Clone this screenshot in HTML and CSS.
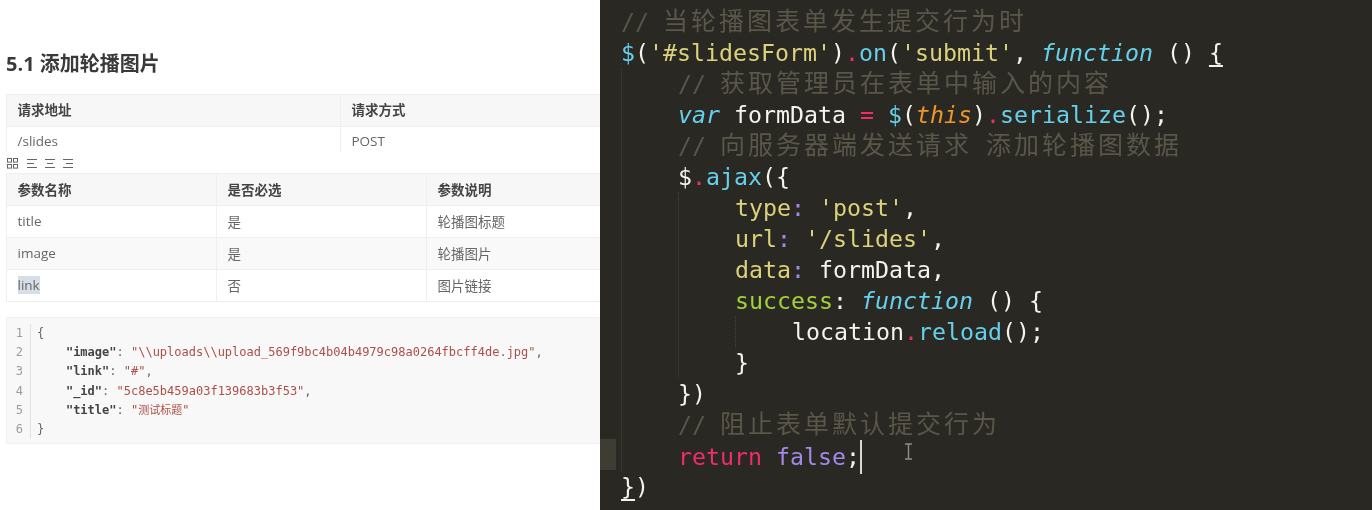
FILE: index.html
```html
<!DOCTYPE html>
<html lang="zh">
<head>
<meta charset="utf-8">
<title>添加轮播图片</title>
<link rel="stylesheet" href="styles.css">
</head>
<body>
<main class="page">
  <section class="doc">
    <h2 class="title">5.1 添加轮播图片</h2>
    <div class="clip">
      <table class="tbl tbl-two">
        <tr><th>请求地址</th><th>请求方式</th></tr>
        <tr><td>/slides</td><td>POST</td></tr>
      </table>
    </div>
    <div class="toolbar">
      <svg class="ico" width="13" height="11" viewBox="0 0 13 11"><g fill="none" stroke="#666" stroke-width="1"><rect x="1.5" y="0.5" width="4" height="3.6"/><rect x="7.5" y="0.5" width="4" height="3.6"/><rect x="1.5" y="6.5" width="4" height="3.6"/><rect x="7.5" y="6.5" width="4" height="3.6"/></g></svg>
      <svg class="ico" width="11" height="11" viewBox="0 0 11 11"><path d="M0 1.5h10M0 5.5h7M0 9.5h10" stroke="#666" fill="none"/></svg>
      <svg class="ico" width="11" height="11" viewBox="0 0 11 11"><path d="M0 1.5h10M2 5.5h6M0 9.5h10" stroke="#666" fill="none"/></svg>
      <svg class="ico" width="11" height="11" viewBox="0 0 11 11"><path d="M0 1.5h10M3 5.5h7M0 9.5h10" stroke="#666" fill="none"/></svg>
    </div>
    <table class="tbl tbl-three">
      <tr><th>参数名称</th><th>是否必选</th><th>参数说明</th></tr>
      <tr><td>title</td><td>是</td><td>轮播图标题</td></tr>
      <tr class="alt"><td>image</td><td>是</td><td>轮播图片</td></tr>
      <tr><td><mark class="sel">link</mark></td><td>否</td><td>图片链接</td></tr>
    </table>
    <div class="snippet">
      <div class="nums"><div>1</div><div>2</div><div>3</div><div>4</div><div>5</div><div>6</div></div>
      <pre class="json"><span class="p">{</span>
    <b class="k">"image"</b><span class="p">:</span> <span class="s">"\\uploads\\upload_569f9bc4b04b4979c98a0264fbcff4de.jpg"</span><span class="p">,</span>
    <b class="k">"link"</b><span class="p">:</span> <span class="s">"#"</span><span class="p">,</span>
    <b class="k">"_id"</b><span class="p">:</span> <span class="s">"5c8e5b459a03f139683b3f53"</span><span class="p">,</span>
    <b class="k">"title"</b><span class="p">:</span> <span class="s">"<span class="cjk-s">测试标题</span>"</span>
<span class="p">}</span></pre>
    </div>
  </section>
  <section class="editor">
    <div class="line"><span class="c">// <span class="h">当轮播图表单发生提交行为时</span></span></div>
    <div class="line"><span class="b">$</span><span class="w">(</span><span class="y">'#slidesForm'</span><span class="w">)</span><span class="r">.</span><span class="b">on</span><span class="w">(</span><span class="y">'submit'</span><span class="w">, </span><span class="bi">function</span><span class="w"> () </span><span class="w u">{</span></div>
    <div class="block">
      <div class="line"><span class="c">// <span class="h">获取管理员在表单中输入的内容</span></span></div>
      <div class="line"><span class="bi">var</span><span class="w"> formData </span><span class="r">=</span> <span class="b">$</span><span class="w">(</span><span class="oi">this</span><span class="w">)</span><span class="r">.</span><span class="b">serialize</span><span class="w">();</span></div>
      <div class="line"><span class="c">// <span class="h">向服务器端发送请求</span> <span class="h">添加轮播图数据</span></span></div>
      <div class="line"><span class="w">$</span><span class="r">.</span><span class="b">ajax</span><span class="w">({</span></div>
      <div class="block">
        <div class="line"><span class="y">type</span><span class="v">:</span> <span class="y">'post'</span><span class="w">,</span></div>
        <div class="line"><span class="y">url</span><span class="v">:</span> <span class="y">'/slides'</span><span class="w">,</span></div>
        <div class="line"><span class="y">data</span><span class="v">:</span> <span class="w">formData,</span></div>
        <div class="line"><span class="g">success</span><span class="w">: </span><span class="bi">function</span><span class="w"> () {</span></div>
        <div class="block">
          <div class="line"><span class="w">location</span><span class="r">.</span><span class="b">reload</span><span class="w">();</span></div>
        </div>
        <div class="line"><span class="w">}</span></div>
      </div>
      <div class="line"><span class="w">})</span></div>
      <div class="line"><span class="c">// <span class="h">阻止表单默认提交行为</span></span></div>
      <div class="line active"><span class="r">return</span> <span class="v">false</span><span class="w">;</span><span class="caret"></span><svg class="ibeam" width="9" height="17" viewBox="0 0 9 17"><path d="M1 1h7M4.5 1v15M1 16h7" stroke="#8f8f88" stroke-width="1.4" fill="none"/></svg></div>
    </div>
    <div class="line"><span class="w u">}</span><span class="w">)</span></div>
  </section>
</main>
</body>
</html>
```
FILE: styles.css
```css
* { box-sizing: border-box; }
html, body { margin: 0; padding: 0; background: #fff; }
.page { display: flex; width: 1372px; height: 510px; overflow: hidden; }

.doc {
  width: 600px;
  height: 510px;
  overflow: hidden;
  padding: 52px 0 0 6px;
  background: #fff;
  color: #666;
  font-family: "Open Sans", "Noto Sans CJK SC", sans-serif;
  font-size: 13.5px;
  filter: blur(0.35px);
}
.title {
  margin: 0 0 16px;
  height: 26px;
  line-height: 24px;
  font-size: 20px;
  font-weight: 700;
  color: #3a3a3a;
}
.clip { height: 58px; overflow: hidden; width: 594px; }
.tbl { border-collapse: collapse; table-layout: fixed; }
.tbl th, .tbl td {
  height: 32px;
  padding: 0 10.5px 3px;
  border: 1px solid #efefef;
  text-align: left;
  vertical-align: middle;
}
.tbl th { background: #f7f7f7; color: #444; font-weight: 700; }
.tbl .alt td { background: #f9f9f9; }
.tbl-two { width: 668px; }
.tbl-two th:first-child, .tbl-two td:first-child { width: 334px; }
.tbl-three { width: 630px; }
.tbl-three th, .tbl-three td { width: 210px; padding-bottom: 1px; }
.sel { background: #d6dee7; color: #666; }

.toolbar { display: flex; align-items: center; gap: 7px; height: 21px; padding: 1px 0 0; }
.ico { display: block; flex: none; }
.ico:first-child { margin-right: 1px; }

.snippet {
  display: flex;
  margin-top: 15px;
  width: 594px;
  height: 127px;
  padding: 6px 0 4px;
  background: #f8f8f8;
  border: 1px solid #f0f0f0;
  border-right: 0;
  font-family: "DejaVu Sans Mono", "Noto Sans CJK SC", monospace;
  font-size: 12px;
  line-height: 19.2px;
}
.nums { width: 24px; padding-right: 7px; text-align: right; color: #9b9b9b; border-right: 1px solid #e2e2e2; }
.json { margin: 0 0 0 6px; font: inherit; color: #555; }
.k { color: #444; font-weight: 700; }
.s { color: #ad4f46; }
.p { color: #666; }
.cjk-s { font-size: 11px; }

.editor {
  flex: 1;
  height: 510px;
  padding: 6px 0 0 21px;
  background: #292823;
  font-family: "DejaVu Sans Mono", "Noto Sans CJK SC", monospace;
  font-size: 23.25px;
  filter: blur(0.45px);
}
.line { height: 31px; line-height: 31px; white-space: pre; }
.block { margin-left: 0; padding-left: 56px; border-left: 1px dotted #44443c; }
.active { position: relative; }
.active::before {
  content: "";
  position: absolute;
  left: -78px;
  top: -1px;
  width: 16px;
  height: 31px;
  background: #3d3d33;
}
.c { color: #5a5649; }
.h { font-size: 25px; letter-spacing: 3px; }
.w { color: #f4f4ee; }
.b { color: #66d0ec; }
.bi { color: #66d0ec; font-style: italic; }
.oi { color: #f0962a; font-style: italic; }
.y { color: #dcd27c; }
.g { color: #a3d13a; }
.r { color: #ee2c6e; }
.v { color: #a488e8; }
.u { text-decoration: underline; text-underline-offset: 4px; }
.caret { display: inline-block; width: 2px; height: 34px; vertical-align: -9px; background: #d8d8d0; }
.ibeam { position: absolute; left: 226px; top: 3px; }
```
